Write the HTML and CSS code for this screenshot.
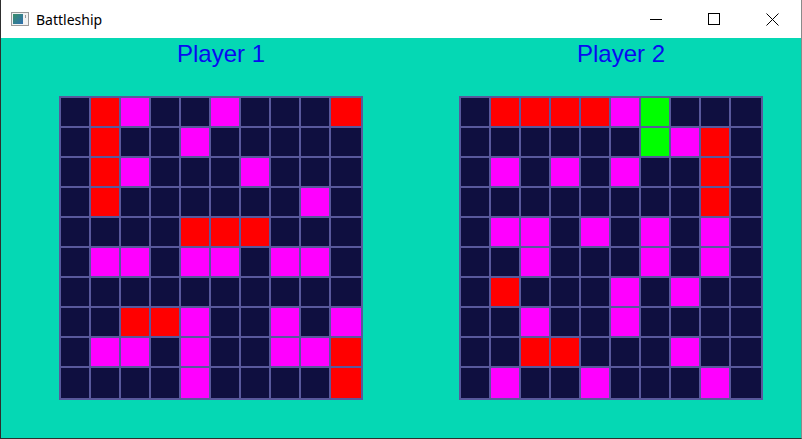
FILE: index.html
```html
<!DOCTYPE html>
<html lang="en">
<head>
  <meta charset="UTF-8">
  <title>Battleship</title>
  <link rel="stylesheet" href="styles.css">
</head>
<body>
  <div class="window">
    <div class="titlebar">
      <svg class="app-icon" width="18" height="14" viewBox="0 0 18 14">
        <defs>
          <linearGradient id="pane" x1="0" y1="0" x2="1" y2="1">
            <stop offset="0" stop-color="#3a8f6a"/>
            <stop offset="1" stop-color="#2f6fb0"/>
          </linearGradient>
        </defs>
        <rect x="0.5" y="0.5" width="17" height="13" fill="#f2f2f2" stroke="#9a9a9a"/>
        <rect x="2" y="2" width="10" height="10" fill="url(#pane)"/>
        <rect x="14" y="3" width="1" height="3" fill="#9a9a9a"/>
      </svg>
      <span class="title">Battleship</span>
      <div class="controls">
        <div class="ctl">
          <svg width="12" height="12" viewBox="0 0 12 12"><path d="M0 6.5H12" stroke="#000" stroke-width="1"/></svg>
        </div>
        <div class="ctl">
          <svg width="12" height="12" viewBox="0 0 12 12"><rect x="0.5" y="0.5" width="11" height="11" fill="none" stroke="#000" stroke-width="1"/></svg>
        </div>
        <div class="ctl">
          <svg width="13" height="13" viewBox="0 0 13 13"><path d="M0.5 0.5L12.5 12.5M12.5 0.5L0.5 12.5" stroke="#000" stroke-width="1"/></svg>
        </div>
      </div>
    </div>

    <div class="client">
      <div class="side">
        <div class="player">Player 1</div>
        <div class="board" id="board1"></div>
      </div>
      <div class="side">
        <div class="player">Player 2</div>
        <div class="board" id="board2"></div>
      </div>
    </div>
  </div>

  <script>
    // . water, r hit, m miss, g sunk
    const board1 = [
      ".rm..m...r",
      ".r..m.....",
      ".rm...m...",
      ".r......m.",
      "....rrr...",
      ".mm.mm.mm.",
      "..........",
      "..rrm..m.m",
      ".mm.m..mmr",
      "....m....r"
    ];
    const board2 = [
      ".rrrrmg...",
      "......gmr.",
      ".m.m.m..r.",
      "........r.",
      ".mm.m.m.m.",
      "..m...m.m.",
      ".r...m.m..",
      "..m..m....",
      "..rr...m..",
      ".m..m...m."
    ];
    const names = { ".": "water", "r": "hit", "m": "miss", "g": "sunk" };

    function fillBoard(id, rows) {
      const el = document.getElementById(id);
      rows.forEach(row => {
        for (const ch of row) {
          const cell = document.createElement("div");
          cell.className = "cell " + names[ch];
          el.appendChild(cell);
        }
      });
    }

    fillBoard("board1", board1);
    fillBoard("board2", board2);
  </script>
</body>
</html>
```

FILE: styles.css
```css
body { margin: 0; background: #fff; }
.window {
  width: 800px;
  height: 438px;
  border-left: 1px solid #2e2e2e;
  border-right: 1px solid #8a8a8a;
  border-bottom: 1px solid #2e2e2e;
  display: flex;
  flex-direction: column;
}
.titlebar {
  height: 38px;
  background: #fff;
  display: flex;
  align-items: center;
  font-family: "Noto Sans", "Liberation Sans", sans-serif;
}
.app-icon { margin-left: 10px; }
.title { margin-left: 7px; font-size: 14px; color: #000; }
.controls { margin-left: auto; display: flex; height: 100%; }
.ctl {
  width: 58px;
  height: 100%;
  display: flex;
  align-items: center;
  justify-content: center;
}
.client {
  flex: 1;
  background: #05d8b4;
  display: flex;
}
.side {
  width: 400px;
  padding-left: 58px;
  box-sizing: border-box;
}
.player {
  width: 304px;
  padding-left: 20px;
  box-sizing: border-box;
  text-align: center;
  font-family: "Liberation Sans", Arial, sans-serif;
  font-size: 24px;
  line-height: 32px;
  color: #0a0af0;
}
.board {
  margin-top: 26px;
  width: 304px;
  height: 304px;
  box-sizing: border-box;
  padding: 2px;
  background: #58589c;
  display: grid;
  grid-template-columns: repeat(9, 28px) 30px;
  grid-template-rows: repeat(9, 28px) 30px;
  gap: 2px;
}
.cell { background: #0f0f40; }
.cell.hit { background: #ff0000; }
.cell.miss { background: #ff00ff; }
.cell.sunk { background: #00ff00; }
```
